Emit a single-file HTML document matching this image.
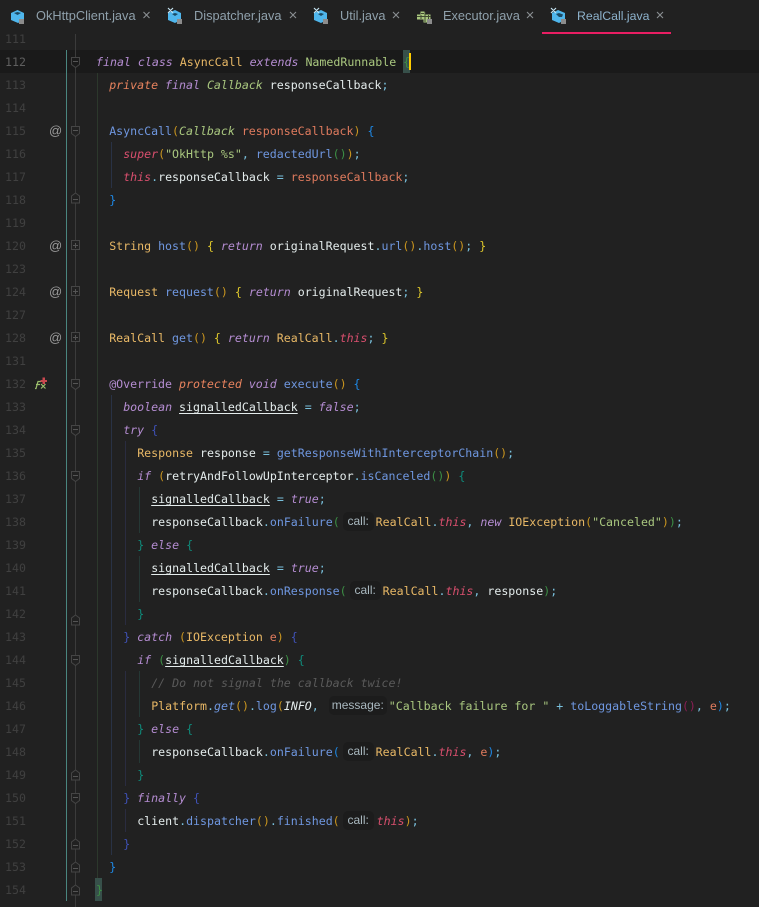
<!DOCTYPE html>
<html><head><meta charset="utf-8">
<style>
html,body{margin:0;padding:0;background:#212121}
#r{position:relative;width:759px;height:907px;overflow:hidden;background:#212121}
.tab{position:absolute;top:8px;font:12.8px/16px "Liberation Sans",sans-serif;color:#8fa0ab;white-space:nowrap}
.n{position:absolute;left:0;width:26px;text-align:right;font:11.6px/23px "DejaVu Sans Mono",monospace;color:#404040;height:23px;margin-top:1px}
.l{position:absolute;font:11.6px/23px "DejaVu Sans Mono",monospace;color:#e4ecec;white-space:pre;height:23px;margin-top:1px}
.k{color:#b58dd2;font-style:italic}
.o{color:#e8835e;font-style:italic}
.c{color:#e8b866}
.t{color:#a9c77f}
.ti{color:#a9c77f;font-style:italic}
.m{color:#6f97e0}
.p{color:#e07b5e}
.h{color:#d94f6e;font-style:italic}
.d{color:#79c0dc}
.s{color:#a9c77f}
.u{text-decoration:underline;text-underline-offset:2px}
.y{color:#c9951f}.by{color:#dcc62b}.gr{color:#3c8f45}.bl{color:#1e88e5}.db{color:#3f51b5}.te{color:#0f8a7a}.mg{color:#8a1f55}
.cm{color:#5a5a5a;font-style:italic}
.hb{display:inline-block;vertical-align:top;position:relative;height:23px}
.hb i{position:absolute;top:1px;height:19px;border-radius:5px;background:#1c1c1c;color:#a9b8bf;font:12px/18px "Liberation Sans",sans-serif;text-align:center}
.at{position:absolute;left:49px;width:12px;text-align:center;font:13px/23px "Liberation Sans",sans-serif;color:#9a9a9a}
</style></head><body><div id="r">

<svg style="position:absolute;left:0;top:0" width="759" height="907">
<rect x="0" y="50" width="759" height="23" fill="#1a1a1a"/>
<rect x="542" y="32" width="129" height="2" fill="#e91e63"/>
<rect x="66" y="50" width="1" height="851" fill="#4a8680"/>
<rect x="75" y="34" width="1" height="873" fill="#3b3b3b"/>
<g fill="#212121" stroke="#454545" stroke-width="1">
<path d="M71.500 57.500h8v7l-4 3-4-3z" fill="#1a1a1a"/>
<path d="M71.500 126.500h8v7l-4 3-4-3z"/>
<path d="M71.500 379.500h8v7l-4 3-4-3z"/>
<path d="M71.500 425.500h8v7l-4 3-4-3z"/>
<path d="M71.500 471.500h8v7l-4 3-4-3z"/>
<path d="M71.500 655.500h8v7l-4 3-4-3z"/>
<path d="M71.500 793.500h8v7l-4 3-4-3z"/>
<path d="M75.500 193l4 3v7h-8v-7z"/>
<path d="M75.500 615l4 3v7h-8v-7z"/>
<path d="M75.500 770l4 3v7h-8v-7z"/>
<path d="M75.500 839l4 3v7h-8v-7z"/>
<path d="M75.500 862l4 3v7h-8v-7z"/>
<path d="M75.500 885l4 3v7h-8v-7z"/>
<rect x="71.500" y="240.500" width="8" height="9"/>
<rect x="71.500" y="286.500" width="8" height="9"/>
<rect x="71.500" y="332.500" width="8" height="9"/>
</g>
<g fill="#555">
<rect x="73" y="61" width="5" height="1"/><rect x="73" y="130" width="5" height="1"/><rect x="73" y="383" width="5" height="1"/><rect x="73" y="429" width="5" height="1"/><rect x="73" y="475" width="5" height="1"/><rect x="73" y="659" width="5" height="1"/><rect x="73" y="797" width="5" height="1"/>
<rect x="73" y="199" width="5" height="1"/><rect x="73" y="621" width="5" height="1"/><rect x="73" y="776" width="5" height="1"/><rect x="73" y="845" width="5" height="1"/><rect x="73" y="868" width="5" height="1"/><rect x="73" y="891" width="5" height="1"/>
<rect x="73" y="245" width="5" height="1"/><rect x="75" y="243" width="1" height="5"/>
<rect x="73" y="291" width="5" height="1"/><rect x="75" y="289" width="1" height="5"/>
<rect x="73" y="337" width="5" height="1"/><rect x="75" y="335" width="1" height="5"/>
</g>
<rect x="97" y="73" width="1" height="805" fill="#2c382c"/>
<g fill="#293245">
<rect x="111" y="142" width="1" height="46"/><rect x="111" y="395" width="1" height="460"/>
</g>
<g fill="#2a2c40">
<rect x="125" y="441" width="1" height="184"/><rect x="125" y="671" width="1" height="115"/><rect x="125" y="809" width="1" height="23"/>
</g>
<g fill="#253835">
<rect x="139" y="487" width="1" height="46"/><rect x="139" y="556" width="1" height="46"/><rect x="139" y="671" width="1" height="46"/><rect x="139" y="740" width="1" height="23"/>
</g>
<rect x="403" y="50" width="7" height="23" fill="#37504a"/>
<rect x="95" y="878" width="7" height="23" fill="#37504a"/>
<rect x="409" y="53" width="2" height="17" fill="#ffcc00"/>
<!-- tab icons -->
<g fill="#4fb6ec">
<path d="M11 13l6.500-3 6.500 3v7l-6 3-7-3z"/>
<path d="M168 13l7-3 6 3v7l-6 3-7-3z"/>
<path d="M314 13l7-3 6 3v7l-6 3-7-3z"/>
<path d="M552 13l6-3 7 3v7l-6 3-7-3z"/>
</g>
<g fill="#1c4a63">
<path d="M14 13l3.500-1 3.500 1-3.500 2z"/>
<path d="M172 14l3-1 3 1-3 2z"/>
<path d="M318 14l3-1 3 1-3 2z"/>
<path d="M556 14l3-1 4 1.500-1 2.500h-3z"/>
</g>
<g fill="#8c8c8c">
<rect x="19" y="19" width="5" height="5"/><rect x="177" y="19" width="5" height="5"/><rect x="323" y="19" width="5" height="5"/><rect x="561" y="19" width="5" height="5"/>
</g>
<g stroke="#c4e2ef" stroke-width="1.200">
<path d="M168 8l5 5M173 8l-5 5M314 8l5 5M319 8l-5 5M551 8l5 5M556 8l-5 5"/>
</g>
<path d="M420.500 11.500h4v3h6v5h-3v3h-4v-3h-6.500v-5h3.500z" fill="#a9c77f"/>
<path d="M417 16.500h14M421 15v4M425 12v10M428.500 15v4M421 13.500h3" stroke="#3f4a30" stroke-width="1" fill="none"/>
<rect x="427" y="19" width="5" height="5" fill="#8c8c8c"/>
<g stroke="#8a8f92" stroke-width="1.100" fill="none">
<path d="M143.500 12l6 6M149.500 12l-6 6"/>
<path d="M290 12l6 6M296 12l-6 6"/>
<path d="M393 12l6 6M399 12l-6 6"/>
<path d="M527 12l6 6M533 12l-6 6"/>
<path d="M657 12l6 6M663 12l-6 6"/>
</g>
<!-- fx -->
<path d="M35 388.500h1l2-7h3M36 384.500h4" stroke="#9cbf6c" stroke-width="1.200" fill="none"/>
<path d="M41 384l4.500 4.500M45.500 384l-4.500 4.500" stroke="#9cbf6c" stroke-width="1.200" fill="none"/>
<path d="M40.500 380h2v-2.500h2.500v2.500h2v2h-2v2h-2.500v-2h-2z" fill="#c9484f"/>
</svg>

<div class="tab" style="left:36px">OkHttpClient.java</div>
<div class="tab" style="left:194px">Dispatcher.java</div>
<div class="tab" style="left:340px">Util.java</div>
<div class="tab" style="left:443px">Executor.java</div>
<div class="tab" style="left:577px;color:#8db2cc;font-size:12.3px">RealCall.java</div>

<div class="n" style="top:27px">111</div>
<div class="n" style="top:50px;color:#5f5f5f">112</div>
<div class="n" style="top:73px">113</div>
<div class="n" style="top:96px">114</div>
<div class="n" style="top:119px">115</div>
<div class="n" style="top:142px">116</div>
<div class="n" style="top:165px">117</div>
<div class="n" style="top:188px">118</div>
<div class="n" style="top:211px">119</div>
<div class="n" style="top:234px">120</div>
<div class="n" style="top:257px">123</div>
<div class="n" style="top:280px">124</div>
<div class="n" style="top:303px">127</div>
<div class="n" style="top:326px">128</div>
<div class="n" style="top:349px">131</div>
<div class="n" style="top:372px">132</div>
<div class="n" style="top:395px">133</div>
<div class="n" style="top:418px">134</div>
<div class="n" style="top:441px">135</div>
<div class="n" style="top:464px">136</div>
<div class="n" style="top:487px">137</div>
<div class="n" style="top:510px">138</div>
<div class="n" style="top:533px">139</div>
<div class="n" style="top:556px">140</div>
<div class="n" style="top:579px">141</div>
<div class="n" style="top:602px">142</div>
<div class="n" style="top:625px">143</div>
<div class="n" style="top:648px">144</div>
<div class="n" style="top:671px">145</div>
<div class="n" style="top:694px">146</div>
<div class="n" style="top:717px">147</div>
<div class="n" style="top:740px">148</div>
<div class="n" style="top:763px">149</div>
<div class="n" style="top:786px">150</div>
<div class="n" style="top:809px">151</div>
<div class="n" style="top:832px">152</div>
<div class="n" style="top:855px">153</div>
<div class="n" style="top:878px">154</div>

<div class="at" style="top:119px">@</div>
<div class="at" style="top:234px">@</div>
<div class="at" style="top:280px">@</div>
<div class="at" style="top:326px">@</div>

<div class="l" style="left:96px;top:50px"><span class="k">final class</span> <span class="c">AsyncCall</span> <span class="k">extends</span> <span class="t">NamedRunnable</span> <span class="gr">{</span></div>
<div class="l" style="left:109.200px;top:73px"><span class="o">private</span> <span class="k">final</span> <span class="ti">Callback</span> responseCallback<span class="d">;</span></div>
<div class="l" style="left:109.200px;top:119px"><span class="m">AsyncCall</span><span class="y">(</span><span class="ti">Callback</span> <span class="p">responseCallback</span><span class="y">)</span> <span class="bl">{</span></div>
<div class="l" style="left:123.200px;top:142px"><span class="h">super</span><span class="y">(</span><span class="s">"OkHttp %s"</span><span class="d">,</span> <span class="m">redactedUrl</span><span class="gr">()</span><span class="y">)</span><span class="d">;</span></div>
<div class="l" style="left:123.200px;top:165px"><span class="h">this</span><span class="d">.</span>responseCallback <span class="d">=</span> <span class="p">responseCallback</span><span class="d">;</span></div>
<div class="l" style="left:109.200px;top:188px"><span class="bl">}</span></div>
<div class="l" style="left:109.200px;top:234px"><span class="c">String</span> <span class="m">host</span><span class="y">()</span> <span class="by">{</span> <span class="k">return</span> originalRequest<span class="d">.</span><span class="m">url</span><span class="y">()</span><span class="d">.</span><span class="m">host</span><span class="y">()</span><span class="d">;</span> <span class="by">}</span></div>
<div class="l" style="left:109.200px;top:280px"><span class="c">Request</span> <span class="m">request</span><span class="y">()</span> <span class="by">{</span> <span class="k">return</span> originalRequest<span class="d">;</span> <span class="by">}</span></div>
<div class="l" style="left:109.200px;top:326px"><span class="c">RealCall</span> <span class="m">get</span><span class="y">()</span> <span class="by">{</span> <span class="k">return</span> <span class="c">RealCall</span><span class="d">.</span><span class="h">this</span><span class="d">;</span> <span class="by">}</span></div>
<div class="l" style="left:109.200px;top:372px"><span class="k" style="font-style:normal">@Override</span> <span class="o">protected</span> <span class="k">void</span> <span class="m">execute</span><span class="y">()</span> <span class="bl">{</span></div>
<div class="l" style="left:123.200px;top:395px"><span class="k">boolean</span> <span class="u">signalledCallback</span> <span class="d">=</span> <span class="k">false</span><span class="d">;</span></div>
<div class="l" style="left:123.200px;top:418px"><span class="k">try</span> <span class="db">{</span></div>
<div class="l" style="left:137.200px;top:441px"><span class="c">Response</span> response <span class="d">=</span> <span class="m">getResponseWithInterceptorChain</span><span class="y">()</span><span class="d">;</span></div>
<div class="l" style="left:137.200px;top:464px"><span class="k">if</span> <span class="y">(</span>retryAndFollowUpInterceptor<span class="d">.</span><span class="m">isCanceled</span><span class="gr">()</span><span class="y">)</span> <span class="te">{</span></div>
<div class="l" style="left:151.200px;top:487px"><span class="u">signalledCallback</span> <span class="d">=</span> <span class="k">true</span><span class="d">;</span></div>
<div class="l" style="left:151.200px;top:510px">responseCallback<span class="d">.</span><span class="m">onFailure</span><span class="gr">(</span><span class="hb" style="width:36px"><i style="left:3px;width:31px">call:</i></span><span class="c">RealCall</span><span class="d">.</span><span class="h">this</span><span class="d">,</span> <span class="k">new</span> <span class="c">IOException</span><span class="y">(</span><span class="s">"Canceled"</span><span class="y">)</span><span class="gr">)</span><span class="d">;</span></div>
<div class="l" style="left:137.200px;top:533px"><span class="te">}</span> <span class="k">else</span> <span class="te">{</span></div>
<div class="l" style="left:151.200px;top:556px"><span class="u">signalledCallback</span> <span class="d">=</span> <span class="k">true</span><span class="d">;</span></div>
<div class="l" style="left:151.200px;top:579px">responseCallback<span class="d">.</span><span class="m">onResponse</span><span class="gr">(</span><span class="hb" style="width:36px"><i style="left:3px;width:31px">call:</i></span><span class="c">RealCall</span><span class="d">.</span><span class="h">this</span><span class="d">,</span> response<span class="gr">)</span><span class="d">;</span></div>
<div class="l" style="left:137.200px;top:602px"><span class="te">}</span></div>
<div class="l" style="left:123.200px;top:625px"><span class="db">}</span> <span class="k">catch</span> <span class="y">(</span><span class="c">IOException</span> <span class="p">e</span><span class="y">)</span> <span class="db">{</span></div>
<div class="l" style="left:137.200px;top:648px"><span class="k">if</span> <span class="gr">(</span><span class="u">signalledCallback</span><span class="gr">)</span> <span class="te">{</span></div>
<div class="l" style="left:151.200px;top:671px"><span class="cm">// Do not signal the callback twice!</span></div>
<div class="l" style="left:151.200px;top:694px"><span class="c">Platform</span><span class="d">.</span><span style="color:#6f97e0;font-style:italic">get</span><span class="y">()</span><span class="d">.</span><span class="m">log</span><span class="y">(</span><span style="font-style:italic">INFO</span><span class="d">,</span><span class="hb" style="width:70px"><i style="left:10px;width:58px">message:</i></span><span class="s">"Callback failure for "</span> <span class="d">+</span> <span class="m">toLoggableString</span><span class="mg">()</span><span class="d">,</span> <span class="p">e</span><span class="bl">)</span><span class="d">;</span></div>
<div class="l" style="left:137.200px;top:717px"><span class="te">}</span> <span class="k">else</span> <span class="te">{</span></div>
<div class="l" style="left:151.200px;top:740px">responseCallback<span class="d">.</span><span class="m">onFailure</span><span class="bl">(</span><span class="hb" style="width:36px"><i style="left:3px;width:31px">call:</i></span><span class="c">RealCall</span><span class="d">.</span><span class="h">this</span><span class="d">,</span> <span class="p">e</span><span class="bl">)</span><span class="d">;</span></div>
<div class="l" style="left:137.200px;top:763px"><span class="te">}</span></div>
<div class="l" style="left:123.200px;top:786px"><span class="db">}</span> <span class="k">finally</span> <span class="db">{</span></div>
<div class="l" style="left:137.200px;top:809px">client<span class="d">.</span><span class="m">dispatcher</span><span class="y">()</span><span class="d">.</span><span class="m">finished</span><span class="y">(</span><span class="hb" style="width:37px"><i style="left:3px;width:31px">call:</i></span><span class="h">this</span><span class="y">)</span><span class="d">;</span></div>
<div class="l" style="left:123.200px;top:832px"><span class="db">}</span></div>
<div class="l" style="left:109.200px;top:855px"><span class="bl">}</span></div>
<div class="l" style="left:96px;top:878px"><span class="gr">}</span></div>
</div></body></html>
